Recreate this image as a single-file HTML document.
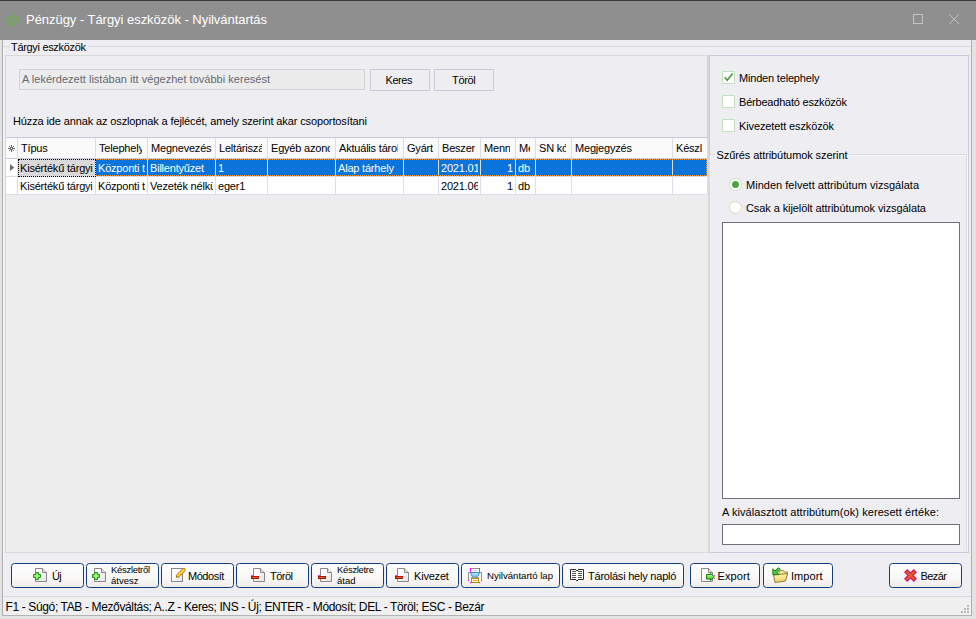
<!DOCTYPE html>
<html><head><meta charset="utf-8"><style>
*{box-sizing:border-box;margin:0;padding:0}
html,body{width:976px;height:619px;overflow:hidden;background:#eeeef2;font-family:"Liberation Sans",sans-serif;font-size:11px;color:#000;position:relative}
.a{position:absolute}
.t{position:absolute;white-space:pre}
.hc{position:absolute;top:138px;height:21px;background:#fafafb;border-right:1px solid #dcdde8;border-bottom:1px solid #c9cbdc;overflow:hidden}
.hc .ht{position:absolute;left:3px;top:5px;letter-spacing:-0.2px;white-space:nowrap;line-height:11px;overflow:hidden}
.rc{position:absolute;height:18px;background:#fff;border-right:1px solid #dcdde8;border-bottom:1px solid #dcdde8;overflow:hidden}
.rc .ct{position:absolute;left:2px;top:3.7px;letter-spacing:-0.2px;white-space:nowrap;line-height:11px;overflow:hidden}
.rc.ra .ct{left:auto;right:2px;text-align:right}
.rc.sel{background:#0a74da;color:#fff}
.rc.foc{background:#d9d9d9;outline:1px dotted #000;outline-offset:-1px}
</style></head><body>
<div class="a" style="left:0px;top:0px;width:976px;height:40px;background:#8f8f8f"></div>
<div class="a" style="left:0px;top:0px;width:976px;height:1px;background:#3a3a3a"></div>
<svg class="a" style="left:6px;top:13px" width="15" height="14" viewBox="0 0 15 14">
<g fill="none" stroke="#6ab344" stroke-width="1.15" stroke-linecap="round">
<path d="M2.8 3.1 Q7.1 7.15 11.6 3.0"/>
<path d="M1.2 5.6 C4 6.2 5.4 7.5 5.4 12.5"/>
<path d="M13.2 5.6 C10.4 6.2 8.6 7.5 8.6 12.8"/>
</g>
<g fill="#6ab344"><circle cx="5.6" cy="1.4" r="0.95"/><circle cx="8.7" cy="1.4" r="0.95"/><circle cx="1.1" cy="8.6" r="0.95"/><circle cx="13.0" cy="8.6" r="0.95"/><circle cx="2.5" cy="11.2" r="0.95"/><circle cx="11.6" cy="11.2" r="0.95"/></g>
</svg>
<div class="a" style="left:913px;top:14px;width:10px;height:10px;border:1px solid #c4c4c4"></div>
<svg class="a" style="left:949px;top:14px" width="11" height="11" viewBox="0 0 11 11"><path d="M0.3 0.3L10 10M10 0.3L0.3 10" stroke="#c4c4c4" stroke-width="1"/></svg>
<div class="a" style="left:0px;top:40px;width:3px;height:579px;background:#e3e3e3"></div>
<div class="a" style="left:2px;top:40px;width:1px;height:576px;background:#acacac"></div>
<div class="a" style="left:972px;top:40px;width:4px;height:579px;background:#e3e3e3"></div>
<div class="a" style="left:971px;top:40px;width:1px;height:576px;background:#b0b0b0"></div>
<div class="a" style="left:0px;top:616px;width:976px;height:3px;background:#e3e3e3"></div>
<div class="a" style="left:3px;top:46px;width:7px;height:1px;background:#dadada"></div>
<div class="a" style="left:88px;top:46px;width:883px;height:1px;background:#dadada"></div>
<div class="a" style="left:3px;top:47px;width:1px;height:549px;background:#f6f6f8"></div>
<div class="a" style="left:5px;top:55px;width:704px;height:498px;border:1px solid #d9d9d9;border-right:2px solid #d6d6d6;background:#eeeef2"></div>
<div class="a" style="left:6px;top:137px;width:702px;height:415px;background:#ededed"></div>
<div class="a" style="left:19px;top:69px;width:346px;height:21px;border:1px solid #d2d2d4;background:#ececec"></div>
<div class="a" style="left:370px;top:69px;width:60px;height:22px;border:1px solid #c9cbdc;background:#eeeef2"></div>
<div class="a" style="left:434px;top:69px;width:60px;height:22px;border:1px solid #c9cbdc;background:#eeeef2"></div>
<div class="a" style="left:6px;top:137px;width:702px;height:1px;background:#c9cbdc"></div>
<div class="hc" style="left:6px;width:12px"><span class="ht" style="width:3px"></span></div>
<div class="hc" style="left:18px;width:78px"><span class="ht" style="width:69px">Típus</span></div>
<div class="hc" style="left:96px;width:52px"><span class="ht" style="width:43px">Telephely</span></div>
<div class="hc" style="left:148px;width:68px"><span class="ht" style="width:61px">Megnevezés</span></div>
<div class="hc" style="left:216px;width:52px"><span class="ht" style="width:43px">Leltáriszám</span></div>
<div class="hc" style="left:268px;width:68px"><span class="ht" style="width:59px">Egyéb azonosító</span></div>
<div class="hc" style="left:336px;width:68px"><span class="ht" style="width:59px">Aktuális tároló</span></div>
<div class="hc" style="left:404px;width:35px"><span class="ht" style="width:26px">Gyártó</span></div>
<div class="hc" style="left:439px;width:42px"><span class="ht" style="width:33px">Beszerzés</span></div>
<div class="hc" style="left:481px;width:35px"><span class="ht" style="width:26px">Mennyiség</span></div>
<div class="hc" style="left:516px;width:20px"><span class="ht" style="width:11px">Me</span></div>
<div class="hc" style="left:536px;width:36px"><span class="ht" style="width:27px">SN kód</span></div>
<div class="hc" style="left:572px;width:101px"><span class="ht" style="width:92px">Megjegyzés</span></div>
<div class="hc" style="left:673px;width:35px"><span class="ht" style="width:26px">Készlet</span></div>
<div class="rc ind" style="left:6px;top:159px;width:12px"><span class="ct" style="width:7px"></span></div>
<div class="rc foc" style="left:18px;top:159px;width:78px"><span class="ct" style="width:73px">Kisértékű tárgyi</span></div>
<div class="rc sel" style="left:96px;top:159px;width:52px"><span class="ct" style="width:47px">Központi telephely</span></div>
<div class="rc sel" style="left:148px;top:159px;width:68px"><span class="ct" style="width:63px">Billentyűzet</span></div>
<div class="rc sel" style="left:216px;top:159px;width:52px"><span class="ct" style="width:47px">1</span></div>
<div class="rc sel" style="left:268px;top:159px;width:68px"><span class="ct" style="width:63px"></span></div>
<div class="rc sel" style="left:336px;top:159px;width:68px"><span class="ct" style="width:63px">Alap tárhely</span></div>
<div class="rc sel" style="left:404px;top:159px;width:35px"><span class="ct" style="width:30px"></span></div>
<div class="rc sel" style="left:439px;top:159px;width:42px"><span class="ct" style="width:37px">2021.01.01</span></div>
<div class="rc sel ra" style="left:481px;top:159px;width:35px"><span class="ct" style="width:30px">1</span></div>
<div class="rc sel" style="left:516px;top:159px;width:20px"><span class="ct" style="width:15px">db</span></div>
<div class="rc sel" style="left:536px;top:159px;width:36px"><span class="ct" style="width:31px"></span></div>
<div class="rc sel" style="left:572px;top:159px;width:101px"><span class="ct" style="width:96px"></span></div>
<div class="rc sel" style="left:673px;top:159px;width:35px"><span class="ct" style="width:30px"></span></div>
<div class="rc" style="left:6px;top:177px;width:12px"><span class="ct" style="width:7px"></span></div>
<div class="rc" style="left:18px;top:177px;width:78px"><span class="ct" style="width:73px">Kisértékű tárgyi</span></div>
<div class="rc" style="left:96px;top:177px;width:52px"><span class="ct" style="width:47px">Központi telephely</span></div>
<div class="rc" style="left:148px;top:177px;width:68px"><span class="ct" style="width:63px">Vezeték nélküli</span></div>
<div class="rc" style="left:216px;top:177px;width:52px"><span class="ct" style="width:47px">eger1</span></div>
<div class="rc" style="left:268px;top:177px;width:68px"><span class="ct" style="width:63px"></span></div>
<div class="rc" style="left:336px;top:177px;width:68px"><span class="ct" style="width:63px"></span></div>
<div class="rc" style="left:404px;top:177px;width:35px"><span class="ct" style="width:30px"></span></div>
<div class="rc" style="left:439px;top:177px;width:42px"><span class="ct" style="width:37px">2021.06.01</span></div>
<div class="rc ra" style="left:481px;top:177px;width:35px"><span class="ct" style="width:30px">1</span></div>
<div class="rc" style="left:516px;top:177px;width:20px"><span class="ct" style="width:15px">db</span></div>
<div class="rc" style="left:536px;top:177px;width:36px"><span class="ct" style="width:31px"></span></div>
<div class="rc" style="left:572px;top:177px;width:101px"><span class="ct" style="width:96px"></span></div>
<div class="rc" style="left:673px;top:177px;width:35px"><span class="ct" style="width:30px"></span></div>
<div class="a" style="left:96px;top:159px;width:612px;height:1px;background-image:repeating-linear-gradient(90deg,#f39a3c 0 1px,transparent 1px 2px)"></div>
<div class="a" style="left:96px;top:175px;width:612px;height:1px;background-image:repeating-linear-gradient(90deg,#f39a3c 0 1px,transparent 1px 2px)"></div>
<div class="a" style="left:706px;top:159px;width:1px;height:17px;background-image:repeating-linear-gradient(180deg,#f39a3c 0 1px,transparent 1px 2px)"></div>
<svg class="a" style="left:8px;top:145px" width="8" height="8" viewBox="0 0 8 8"><g stroke="#5c5c5c" stroke-width="0.9"><path d="M3.5 0V3M3.5 4V7M0 3.5H3M4 3.5H7M1 1L3 3M4 4L6 6M6 1L4 3M3 4L1 6"/></g></svg>
<svg class="a" style="left:10px;top:164px" width="5" height="7" viewBox="0 0 5 7"><path d="M0 0L4.2 3.5L0 7Z" fill="#6a6a6a"/></svg>
<div class="a" style="left:709px;top:55px;width:260px;height:498px;border:1px solid #c9cbdc;background:#eeeef2"></div>
<div class="a" style="left:708px;top:155px;width:2px;height:398px;background:#d9d9d9"></div>
<div class="a" style="left:710px;top:155px;width:1px;height:397px;background:#f3f3f6"></div>
<div class="a" style="left:722px;top:71px;width:13px;height:13px;border:1px solid #c5e0bf;background:#fff"></div>
<div class="a" style="left:722px;top:95px;width:13px;height:13px;border:1px solid #c5e0bf;background:#fff"></div>
<div class="a" style="left:722px;top:119px;width:13px;height:13px;border:1px solid #c5e0bf;background:#fff"></div>
<svg class="a" style="left:722px;top:71px" width="13" height="13" viewBox="0 0 13 13"><path d="M2.8 6.3L5.2 9.2L10.6 2.6" fill="none" stroke="#4a9a3c" stroke-width="1.6"/></svg>
<div class="a" style="left:710px;top:154px;width:5px;height:1px;background:#dadada"></div>
<div class="a" style="left:849px;top:154px;width:118px;height:1px;background:#dadada"></div>
<div class="a" style="left:966px;top:154px;width:1px;height:397px;background:#dcdcdc"></div>
<div class="a" style="left:967px;top:155px;width:1px;height:396px;background:#f9f9fb"></div>
<div class="a" style="left:710px;top:155px;width:5px;height:1px;background:#f9f9fb"></div>
<div class="a" style="left:849px;top:155px;width:117px;height:1px;background:#f9f9fb"></div>
<div class="a" style="left:729px;top:178px;width:13px;height:13px;border:1px solid #c8e3c0;border-radius:50%;background:#fff"></div>
<div class="a" style="left:729px;top:201px;width:13px;height:13px;border:1px solid #c8e3c0;border-radius:50%;background:#fff"></div>
<div class="a" style="left:731.6px;top:180.8px;width:7.6px;height:7.6px;border-radius:50%;background:#52a043"></div>
<div class="a" style="left:722px;top:222px;width:238px;height:277px;border:1px solid #6c717c;background:#fff"></div>
<div class="a" style="left:722px;top:524px;width:238px;height:21px;border:1px solid #6c717c;background:#fff"></div>
<div class="a" style="left:11px;top:563px;width:73px;height:25px;border:1.5px solid #133f7a;border-radius:3.5px;background:linear-gradient(#fdfdfd,#f9f8f7 60%,#efebe8)"></div>
<svg class="a" style="left:31px;top:567px" width="17" height="16" viewBox="0 0 17 16"><defs><linearGradient id="dg" x1="0" y1="0" x2="1" y2="1"><stop offset="0.3" stop-color="#ffffff"/><stop offset="1" stop-color="#e2e2e2"/></linearGradient><radialGradient id="pg"><stop offset="0" stop-color="#b8ff98"/><stop offset="1" stop-color="#70d850"/></radialGradient></defs><path d="M4.5 1.5H11.5L15.5 5.5V14.5H4.5Z" fill="url(#dg)" stroke="#8c8689" stroke-width="1"/><path d="M11.5 1.5V5.5H15.5" fill="#e4e4e4" stroke="#8c8689" stroke-width="1"/><path d="M4.5 5.5H7.5V7.5H9.5V10.5H7.5V12.5H4.5V10.5H2.5V7.5H4.5Z" fill="url(#pg)" stroke="#23901a" stroke-width="1"/></svg>
<div class="a" style="left:86px;top:563px;width:73px;height:25px;border:1.5px solid #133f7a;border-radius:3.5px;background:linear-gradient(#fdfdfd,#f9f8f7 60%,#efebe8)"></div>
<svg class="a" style="left:90px;top:567px" width="17" height="16" viewBox="0 0 17 16"><defs><linearGradient id="dg" x1="0" y1="0" x2="1" y2="1"><stop offset="0.3" stop-color="#ffffff"/><stop offset="1" stop-color="#e2e2e2"/></linearGradient><radialGradient id="pg"><stop offset="0" stop-color="#b8ff98"/><stop offset="1" stop-color="#70d850"/></radialGradient></defs><path d="M4.5 1.5H11.5L15.5 5.5V14.5H4.5Z" fill="url(#dg)" stroke="#8c8689" stroke-width="1"/><path d="M11.5 1.5V5.5H15.5" fill="#e4e4e4" stroke="#8c8689" stroke-width="1"/><path d="M4.5 5.5H7.5V7.5H9.5V10.5H7.5V12.5H4.5V10.5H2.5V7.5H4.5Z" fill="url(#pg)" stroke="#23901a" stroke-width="1"/></svg>
<div class="a" style="left:161px;top:563px;width:73px;height:25px;border:1.5px solid #133f7a;border-radius:3.5px;background:linear-gradient(#fdfdfd,#f9f8f7 60%,#efebe8)"></div>
<svg class="a" style="left:171px;top:567px" width="16" height="16" viewBox="0 0 16 16"><defs><linearGradient id="dg2" x1="0" y1="0" x2="1" y2="1"><stop offset="0.3" stop-color="#ffffff"/><stop offset="1" stop-color="#e2e2e2"/></linearGradient></defs><rect x="0.5" y="1.5" width="11" height="13" fill="url(#dg2)" stroke="#8c8689" stroke-width="1"/><path d="M6.8 8.8L12.8 2.8" stroke="#c98510" stroke-width="3.8" stroke-linecap="round"/><path d="M7 8.6L12.6 3" stroke="#ffd84a" stroke-width="2" stroke-linecap="round"/><rect x="5.2" y="9.4" width="1" height="1" fill="#606010"/></svg>
<div class="a" style="left:236px;top:563px;width:73px;height:25px;border:1.5px solid #133f7a;border-radius:3.5px;background:linear-gradient(#fdfdfd,#f9f8f7 60%,#efebe8)"></div>
<svg class="a" style="left:249px;top:567px" width="17" height="16" viewBox="0 0 17 16"><defs><linearGradient id="dg" x1="0" y1="0" x2="1" y2="1"><stop offset="0.3" stop-color="#ffffff"/><stop offset="1" stop-color="#e2e2e2"/></linearGradient><radialGradient id="pg"><stop offset="0" stop-color="#b8ff98"/><stop offset="1" stop-color="#70d850"/></radialGradient></defs><path d="M4.5 1.5H11.5L15.5 5.5V14.5H4.5Z" fill="url(#dg)" stroke="#8c8689" stroke-width="1"/><path d="M11.5 1.5V5.5H15.5" fill="#e4e4e4" stroke="#8c8689" stroke-width="1"/><rect x="2.5" y="9.5" width="7" height="2" fill="#f05a1c" stroke="#a8180a" stroke-width="1"/><rect x="2" y="8" width="2" height="1" fill="#ff30ff"/></svg>
<div class="a" style="left:311px;top:563px;width:73px;height:25px;border:1.5px solid #133f7a;border-radius:3.5px;background:linear-gradient(#fdfdfd,#f9f8f7 60%,#efebe8)"></div>
<svg class="a" style="left:316px;top:567px" width="17" height="16" viewBox="0 0 17 16"><defs><linearGradient id="dg" x1="0" y1="0" x2="1" y2="1"><stop offset="0.3" stop-color="#ffffff"/><stop offset="1" stop-color="#e2e2e2"/></linearGradient><radialGradient id="pg"><stop offset="0" stop-color="#b8ff98"/><stop offset="1" stop-color="#70d850"/></radialGradient></defs><path d="M4.5 1.5H11.5L15.5 5.5V14.5H4.5Z" fill="url(#dg)" stroke="#8c8689" stroke-width="1"/><path d="M11.5 1.5V5.5H15.5" fill="#e4e4e4" stroke="#8c8689" stroke-width="1"/><rect x="2.5" y="9.5" width="7" height="2" fill="#f05a1c" stroke="#a8180a" stroke-width="1"/><rect x="2" y="8" width="2" height="1" fill="#ff30ff"/></svg>
<div class="a" style="left:386px;top:563px;width:73px;height:25px;border:1.5px solid #133f7a;border-radius:3.5px;background:linear-gradient(#fdfdfd,#f9f8f7 60%,#efebe8)"></div>
<svg class="a" style="left:393px;top:567px" width="17" height="16" viewBox="0 0 17 16"><defs><linearGradient id="dg" x1="0" y1="0" x2="1" y2="1"><stop offset="0.3" stop-color="#ffffff"/><stop offset="1" stop-color="#e2e2e2"/></linearGradient><radialGradient id="pg"><stop offset="0" stop-color="#b8ff98"/><stop offset="1" stop-color="#70d850"/></radialGradient></defs><path d="M4.5 1.5H11.5L15.5 5.5V14.5H4.5Z" fill="url(#dg)" stroke="#8c8689" stroke-width="1"/><path d="M11.5 1.5V5.5H15.5" fill="#e4e4e4" stroke="#8c8689" stroke-width="1"/><rect x="2.5" y="9.5" width="7" height="2" fill="#f05a1c" stroke="#a8180a" stroke-width="1"/><rect x="2" y="8" width="2" height="1" fill="#ff30ff"/></svg>
<div class="a" style="left:461px;top:563px;width:99px;height:25px;border:1.5px solid #133f7a;border-radius:3.5px;background:linear-gradient(#fdfdfd,#f9f8f7 60%,#efebe8)"></div>
<svg class="a" style="left:468px;top:567px" width="15" height="17" viewBox="0 0 15 17"><rect x="0" y="5" width="14" height="8" fill="#f6f6f6"/><rect x="0" y="5" width="1" height="8" fill="#8e8e8e"/><rect x="13" y="5" width="1" height="8" fill="#8e8e8e"/><rect x="0" y="5" width="14" height="1" fill="#9a9a9a"/><rect x="2" y="1" width="10" height="4" fill="#ffffff"/><rect x="2" y="1" width="10" height="1" fill="#8e8e8e"/><rect x="4" y="3" width="6" height="1" fill="#dddddd"/><rect x="2" y="1" width="1" height="4" fill="#ff10ff"/><rect x="11" y="1" width="1" height="4" fill="#ff10ff"/><path d="M2.5 5.5H11.5L10 9.2H4Z" fill="#9fdcf8" stroke="#3f8fd0" stroke-width="1"/><rect x="3" y="10" width="8" height="1" fill="#a0a0a0"/><rect x="3.5" y="11.5" width="7" height="4" fill="#fff6c8" stroke="#b0900a" stroke-width="1"/><rect x="5" y="13" width="4" height="1" fill="#f4b040"/><rect x="0" y="13" width="1.2" height="1.2" fill="#ff10ff"/><rect x="13" y="13" width="1.2" height="1.2" fill="#ff10ff"/><rect x="2" y="15" width="1.2" height="1.2" fill="#ff10ff"/><rect x="11" y="15" width="1.2" height="1.2" fill="#ff10ff"/></svg>
<div class="a" style="left:562px;top:563px;width:122px;height:25px;border:1.5px solid #133f7a;border-radius:3.5px;background:linear-gradient(#fdfdfd,#f9f8f7 60%,#efebe8)"></div>
<svg class="a" style="left:567px;top:565px" width="20" height="18" viewBox="0 0 20 18"><rect x="4" y="5" width="12" height="9" fill="#ffffff"/><path d="M9 4.5H3.5V14.5H9M11 4.5H16.5V14.5H11" fill="none" stroke="#2e2e2e" stroke-width="1"/><rect x="9" y="5" width="2" height="1" fill="#2e2e2e"/><rect x="9" y="15" width="2" height="1" fill="#2e2e2e"/><g fill="#555555"><rect x="5" y="6" width="4" height="1"/><rect x="5" y="8" width="4" height="1"/><rect x="5" y="10" width="4" height="1"/><rect x="5" y="12" width="4" height="1"/><rect x="11" y="6" width="4" height="1"/><rect x="11" y="8" width="4" height="1"/><rect x="11" y="10" width="4" height="1"/><rect x="11" y="12" width="4" height="1"/></g></svg>
<div class="a" style="left:690px;top:563px;width:70px;height:25px;border:1.5px solid #133f7a;border-radius:3.5px;background:linear-gradient(#fdfdfd,#f9f8f7 60%,#efebe8)"></div>
<svg class="a" style="left:700px;top:567px" width="16" height="16" viewBox="0 0 16 16"><defs><linearGradient id="dg2" x1="0" y1="0" x2="1" y2="1"><stop offset="0.3" stop-color="#ffffff"/><stop offset="1" stop-color="#e2e2e2"/></linearGradient></defs><path d="M1.5 1.5H8.5L12.5 5.5V14.5H1.5Z" fill="url(#dg2)" stroke="#8c8689" stroke-width="1"/><path d="M8.5 1.5V5.5H12.5" fill="#e4e4e4" stroke="#8c8689" stroke-width="1"/><defs><linearGradient id="ag" x1="0" y1="0" x2="0" y2="1"><stop offset="0" stop-color="#c8ffa8"/><stop offset="0.6" stop-color="#70e040"/><stop offset="1" stop-color="#40b020"/></linearGradient></defs><path d="M6.5 7.5H10.5V6.3L14.4 9.8L10.5 13.3V12H6.5Z" fill="url(#ag)" stroke="#167a10" stroke-width="1"/><rect x="14" y="8" width="1" height="1" fill="#ff30ff"/><rect x="14" y="11" width="1" height="1" fill="#ff30ff"/></svg>
<div class="a" style="left:763px;top:563px;width:70px;height:25px;border:1.5px solid #133f7a;border-radius:3.5px;background:linear-gradient(#fdfdfd,#f9f8f7 60%,#efebe8)"></div>
<svg class="a" style="left:772px;top:567px" width="17" height="17" viewBox="0 0 17 17"><defs><linearGradient id="fg" x1="0" y1="0" x2="0" y2="1"><stop offset="0" stop-color="#fff6b0"/><stop offset="1" stop-color="#e8d070"/></linearGradient></defs><path d="M5.5 7.5L8.5 3.5H11.5L12.5 5H15.5V8Z" fill="#f2e6a0" stroke="#a8883a" stroke-width="1"/><path d="M1.5 8L15.5 6.5L13.5 14L3 15.5Z" fill="url(#fg)" stroke="#9a7a28" stroke-width="1"/><path d="M0.8 1.8L3 4L6.4 0.6L8.2 2.4L4.8 5.8L6.6 7.6H0.8Z" fill="#52c442" stroke="#1f8a12" stroke-width="1"/></svg>
<div class="a" style="left:889px;top:563px;width:73px;height:25px;border:1.5px solid #133f7a;border-radius:3.5px;background:linear-gradient(#fdfdfd,#f9f8f7 60%,#efebe8)"></div>
<svg class="a" style="left:903px;top:568px" width="15" height="15" viewBox="0 0 15 15"><path d="M2.6 2.6L12.4 12.4M12.4 2.6L2.6 12.4" stroke="#f010e8" stroke-width="4.6"/><path d="M2.9 2.9L12.1 12.1M12.1 2.9L2.9 12.1" stroke="#9a2010" stroke-width="3.6"/><path d="M3.3 3.3L11.7 11.7M11.7 3.3L3.3 11.7" stroke="#f05a28" stroke-width="2.4"/></svg>
<div class="a" style="left:3px;top:596px;width:968px;height:1px;background:#d9d9d9"></div>
<div class="a" style="left:3px;top:597px;width:968px;height:18px;background:#f0f0f0"></div>
<div class="a" style="left:3px;top:615px;width:968px;height:1px;background:#b4b4b4"></div>
<svg class="a" style="left:959px;top:605px" width="11" height="11" viewBox="0 0 11 11"><g fill="#b8b8b8"><rect x="8" y="0" width="2" height="2"/><rect x="5" y="3" width="2" height="2"/><rect x="8" y="3" width="2" height="2"/><rect x="2" y="6" width="2" height="2"/><rect x="5" y="6" width="2" height="2"/><rect x="8" y="6" width="2" height="2"/></g></svg>
<div class="t" style="left:26px;top:13.00px;font-size:13px;line-height:13px;letter-spacing:-0.038px;color:#ffffff;">Pénzügy - Tárgyi eszközök - Nyilvántartás</div>
<div class="t" style="left:11px;top:41.69px;font-size:11px;line-height:11px;letter-spacing:-0.320px;">Tárgyi eszközök</div>
<div class="t" style="left:22px;top:73.69px;font-size:11px;line-height:11px;letter-spacing:0.019px;color:#676971;">A lekérdezett listában itt végezhet további keresést</div>
<div class="t" style="left:385.5px;top:74.69px;font-size:11px;line-height:11px;letter-spacing:-0.438px;">Keres</div>
<div class="t" style="left:452px;top:74.69px;font-size:11px;line-height:11px;letter-spacing:-0.341px;">Töröl</div>
<div class="t" style="left:13px;top:115.69px;font-size:11px;line-height:11px;letter-spacing:-0.126px;">Húzza ide annak az oszlopnak a fejlécét, amely szerint akar csoportosítani</div>
<div class="t" style="left:739px;top:72.69px;font-size:11px;line-height:11px;letter-spacing:-0.185px;">Minden telephely</div>
<div class="t" style="left:739px;top:96.69px;font-size:11px;line-height:11px;letter-spacing:-0.206px;">Bérbeadható eszközök</div>
<div class="t" style="left:739px;top:120.69px;font-size:11px;line-height:11px;letter-spacing:-0.123px;">Kivezetett eszközök</div>
<div class="t" style="left:716.5px;top:149.69px;font-size:11px;line-height:11px;letter-spacing:-0.088px;">Szűrés attribútumok szerint</div>
<div class="t" style="left:746px;top:179.69px;font-size:11px;line-height:11px;letter-spacing:0.017px;">Minden felvett attribútum vizsgálata</div>
<div class="t" style="left:746px;top:202.69px;font-size:11px;line-height:11px;letter-spacing:-0.090px;">Csak a kijelölt attribútumok vizsgálata</div>
<div class="t" style="left:722px;top:506.69px;font-size:11px;line-height:11px;letter-spacing:0.067px;">A kiválasztott attribútum(ok) keresett értéke:</div>
<div class="t" style="left:52px;top:570.69px;font-size:11px;line-height:11px;letter-spacing:-0.591px;">Új</div>
<div class="t" style="left:111px;top:564.96px;font-size:9.5px;line-height:9.5px;letter-spacing:-0.302px;">Készletről</div>
<div class="t" style="left:111px;top:575.96px;font-size:9.5px;line-height:9.5px;">átvesz</div>
<div class="t" style="left:188px;top:570.69px;font-size:11px;line-height:11px;letter-spacing:-0.457px;">Módosít</div>
<div class="t" style="left:270px;top:570.69px;font-size:11px;line-height:11px;letter-spacing:-0.516px;">Töröl</div>
<div class="t" style="left:337px;top:564.96px;font-size:9.5px;line-height:9.5px;letter-spacing:-0.326px;">Készletre</div>
<div class="t" style="left:337px;top:575.96px;font-size:9.5px;line-height:9.5px;">átad</div>
<div class="t" style="left:414px;top:570.69px;font-size:11px;line-height:11px;letter-spacing:-0.196px;">Kivezet</div>
<div class="t" style="left:487px;top:570.87px;font-size:9.6px;line-height:9.6px;letter-spacing:-0.008px;">Nyilvántartó lap</div>
<div class="t" style="left:588px;top:570.69px;font-size:11px;line-height:11px;letter-spacing:-0.219px;">Tárolási hely napló</div>
<div class="t" style="left:717.5px;top:570.69px;font-size:11px;line-height:11px;letter-spacing:0.121px;">Export</div>
<div class="t" style="left:791px;top:570.69px;font-size:11px;line-height:11px;letter-spacing:0.062px;">Import</div>
<div class="t" style="left:920.6px;top:570.99px;font-size:11px;line-height:11px;letter-spacing:-0.588px;">Bezár</div>
<div class="t" style="left:5.5px;top:601.24px;font-size:12px;line-height:12px;letter-spacing:-0.366px;">F1 - Súgó; TAB - Mezőváltás; A..Z - Keres; INS - Új; ENTER - Módosít; DEL - Töröl; ESC - Bezár</div>
</body></html>
